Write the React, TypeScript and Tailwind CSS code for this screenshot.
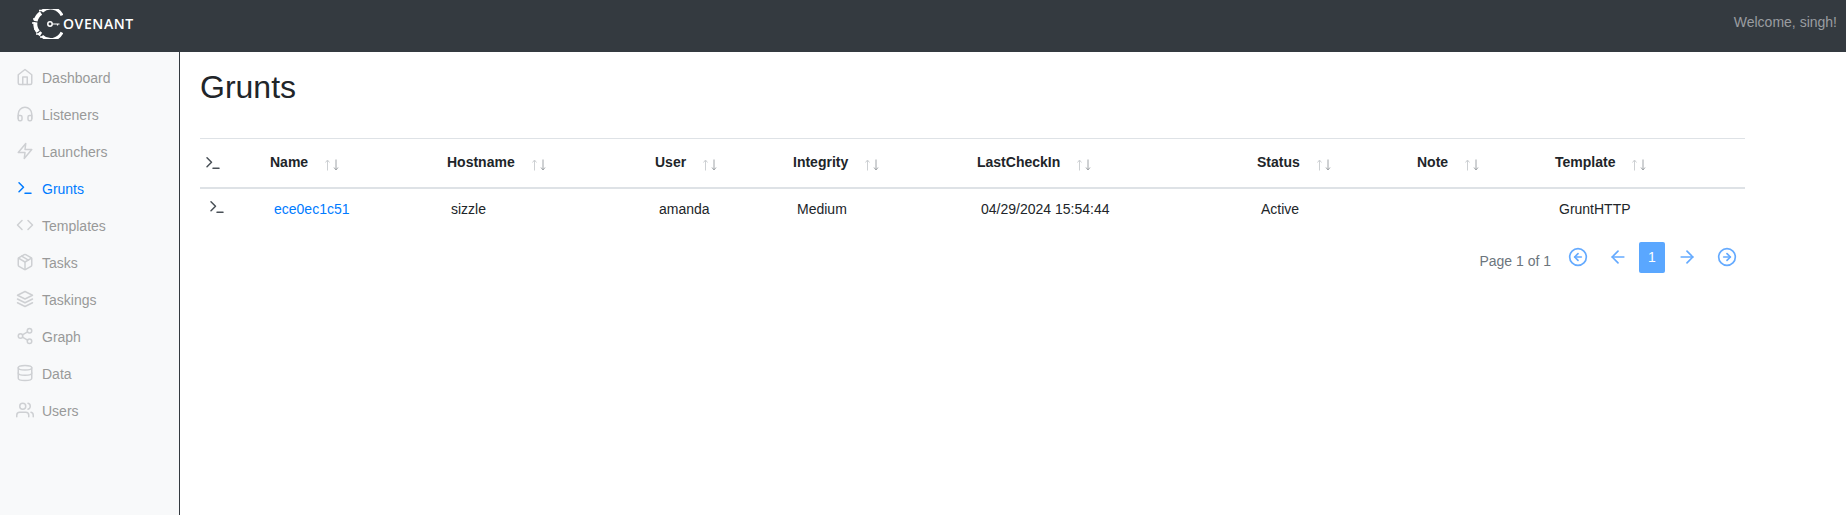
import type { ComponentType } from "react";
import {
  FiArrowLeft,
  FiArrowLeftCircle,
  FiArrowRight,
  FiArrowRightCircle,
  FiCode,
  FiDatabase,
  FiHeadphones,
  FiHome,
  FiLayers,
  FiPackage,
  FiShare2,
  FiTerminal,
  FiUsers,
  FiZap,
} from "react-icons/fi";

const navItems: { label: string; icon: ComponentType<{ className?: string }>; active?: boolean }[] = [
  { label: "Dashboard", icon: FiHome },
  { label: "Listeners", icon: FiHeadphones },
  { label: "Launchers", icon: FiZap },
  { label: "Grunts", icon: FiTerminal, active: true },
  { label: "Templates", icon: FiCode },
  { label: "Tasks", icon: FiPackage },
  { label: "Taskings", icon: FiLayers },
  { label: "Graph", icon: FiShare2 },
  { label: "Data", icon: FiDatabase },
  { label: "Users", icon: FiUsers },
];

const columns = [
  { label: "Name", width: "w-[177px]" },
  { label: "Hostname", width: "w-[208px]" },
  { label: "User", width: "w-[138px]" },
  { label: "Integrity", width: "w-[184px]" },
  { label: "LastCheckIn", width: "w-[280px]" },
  { label: "Status", width: "w-[160px]" },
  { label: "Note", width: "w-[138px]" },
  { label: "Template", width: "w-[195px]" },
];

const row = ["sizzle", "amanda", "Medium", "04/29/2024 15:54:44", "Active", "", "GruntHTTP"];

const Logo = () => (
  <div className="flex items-center ml-[31px] mt-[-5px]">
    <svg width="32" height="30" viewBox="0 0 32 30" fill="none" stroke="white">
      <path d="M31 6.5A12.5 12.5 0 0 0 11 2.5" strokeWidth="3" />
      <path d="M11 27A12.5 12.5 0 0 0 31 23.5" strokeWidth="3" />
      <path d="M10 4A13 13 0 0 0 10 25.5" strokeWidth="4" strokeDasharray="10 1" />
      <path d="M2 10h3M1 14h3M3 20h3M5 25h4M8 1.5h4M9 28h3" strokeWidth="1.6" />
      <circle cx="19" cy="15" r="2.2" strokeWidth="1.5" />
      <path d="M21.5 15h7M26.5 15v1.5" strokeWidth="1.2" />
    </svg>
    <span className="font-['Open_Sans',sans-serif] text-[14px] leading-none font-semibold tracking-[0.6px] text-white">
      OVENANT
    </span>
  </div>
);

const Sidebar = () => (
  <aside className="w-[180px] shrink-0 bg-[#f8f9fa] border-r-[1.5px] border-[#343a40] pt-[8px]">
    {navItems.map((item) => (
      <div
        key={item.label}
        className={`h-[37px] flex items-center pl-[16px] text-[14px] ${item.active ? "text-[#007bff]" : "text-[#999]"}`}
      >
        <item.icon className={`w-[18px] h-[18px] mt-[-3px] shrink-0 ${item.active ? "" : "text-[#ced0d3]"}`} />
        <span className="ml-[8px]">{item.label}</span>
      </div>
    ))}
  </aside>
);

const SortArrows = () => (
  <svg width="17" height="12" viewBox="0 0 17 12" fill="none" className="ml-[16px] mt-[4px]">
    <path d="M3.5 11.5V1M1.5 3.5 3.5 1l2 2.5" stroke="#cdd0d3" />
    <path d="M12 .5V11M10 8.5l2 2.5 2-2.5" stroke="#a0a4a8" />
  </svg>
);

const GruntsTable = () => (
  <table className="w-[1545px] table-fixed border-collapse text-[14px] text-[#212529]">
    <thead>
      <tr className="h-[49px] border-t-[1.5px] border-b-[2.5px] border-[#dee2e6]">
        <th className="w-[65px] text-left pl-[4px]">
          <FiTerminal className="w-[18px] h-[18px] text-[#495057]" />
        </th>
        {columns.map((col) => (
          <th key={col.label} className={`${col.width} text-left pl-[5px] font-bold`}>
            <span className="inline-flex items-center">
              {col.label}
              <SortArrows />
            </span>
          </th>
        ))}
      </tr>
    </thead>
    <tbody>
      <tr className="h-[42px]">
        <td className="pl-[8px]">
          <FiTerminal className="w-[18px] h-[18px] text-[#495057] mt-[-4px]" />
        </td>
        <td className="pl-[9px] text-[#007bff]">ece0ec1c51</td>
        {row.map((value, i) => (
          <td key={i} className="pl-[9px]">
            {value}
          </td>
        ))}
      </tr>
    </tbody>
  </table>
);

const Pager = () => (
  <div className="w-[1545px] flex justify-end items-start mt-[12px] text-[#64aaff]">
    <span className="text-[14px] text-[#6c757d] mt-[9px]">Page 1 of 1</span>
    <FiArrowLeftCircle className="w-[20px] h-[20px] ml-[17px] mt-[5px]" />
    <FiArrowLeft className="w-[20px] h-[20px] ml-[20px] mt-[5px]" />
    <span className="w-[26px] h-[31px] ml-[11px] bg-[#5aa7ff] rounded-[2px] text-white text-[14px] flex items-center justify-center">
      1
    </span>
    <FiArrowRight className="w-[20px] h-[20px] ml-[12px] mt-[5px]" />
    <FiArrowRightCircle className="w-[20px] h-[20px] ml-[20px] mt-[5px] mr-[8px]" />
  </div>
);

const App = () => {
  return (
    <div className="h-[515px] w-[1846px] flex flex-col overflow-hidden bg-white font-['Liberation_Sans',sans-serif]">
      <header className="h-[52px] shrink-0 bg-[#343a40] flex items-center justify-between">
        <Logo />
        <span className="text-[14px] text-[#9a9da0] mr-[9px] mt-[-8px]">Welcome, singh!</span>
      </header>
      <div className="flex flex-1">
        <Sidebar />
        <main className="pl-[20px] pt-[16px]">
          <h1 className="text-[32px] leading-[38px] text-[#212529] mb-[32px]">Grunts</h1>
          <GruntsTable />
          <Pager />
        </main>
      </div>
    </div>
  );
};

export default App;
